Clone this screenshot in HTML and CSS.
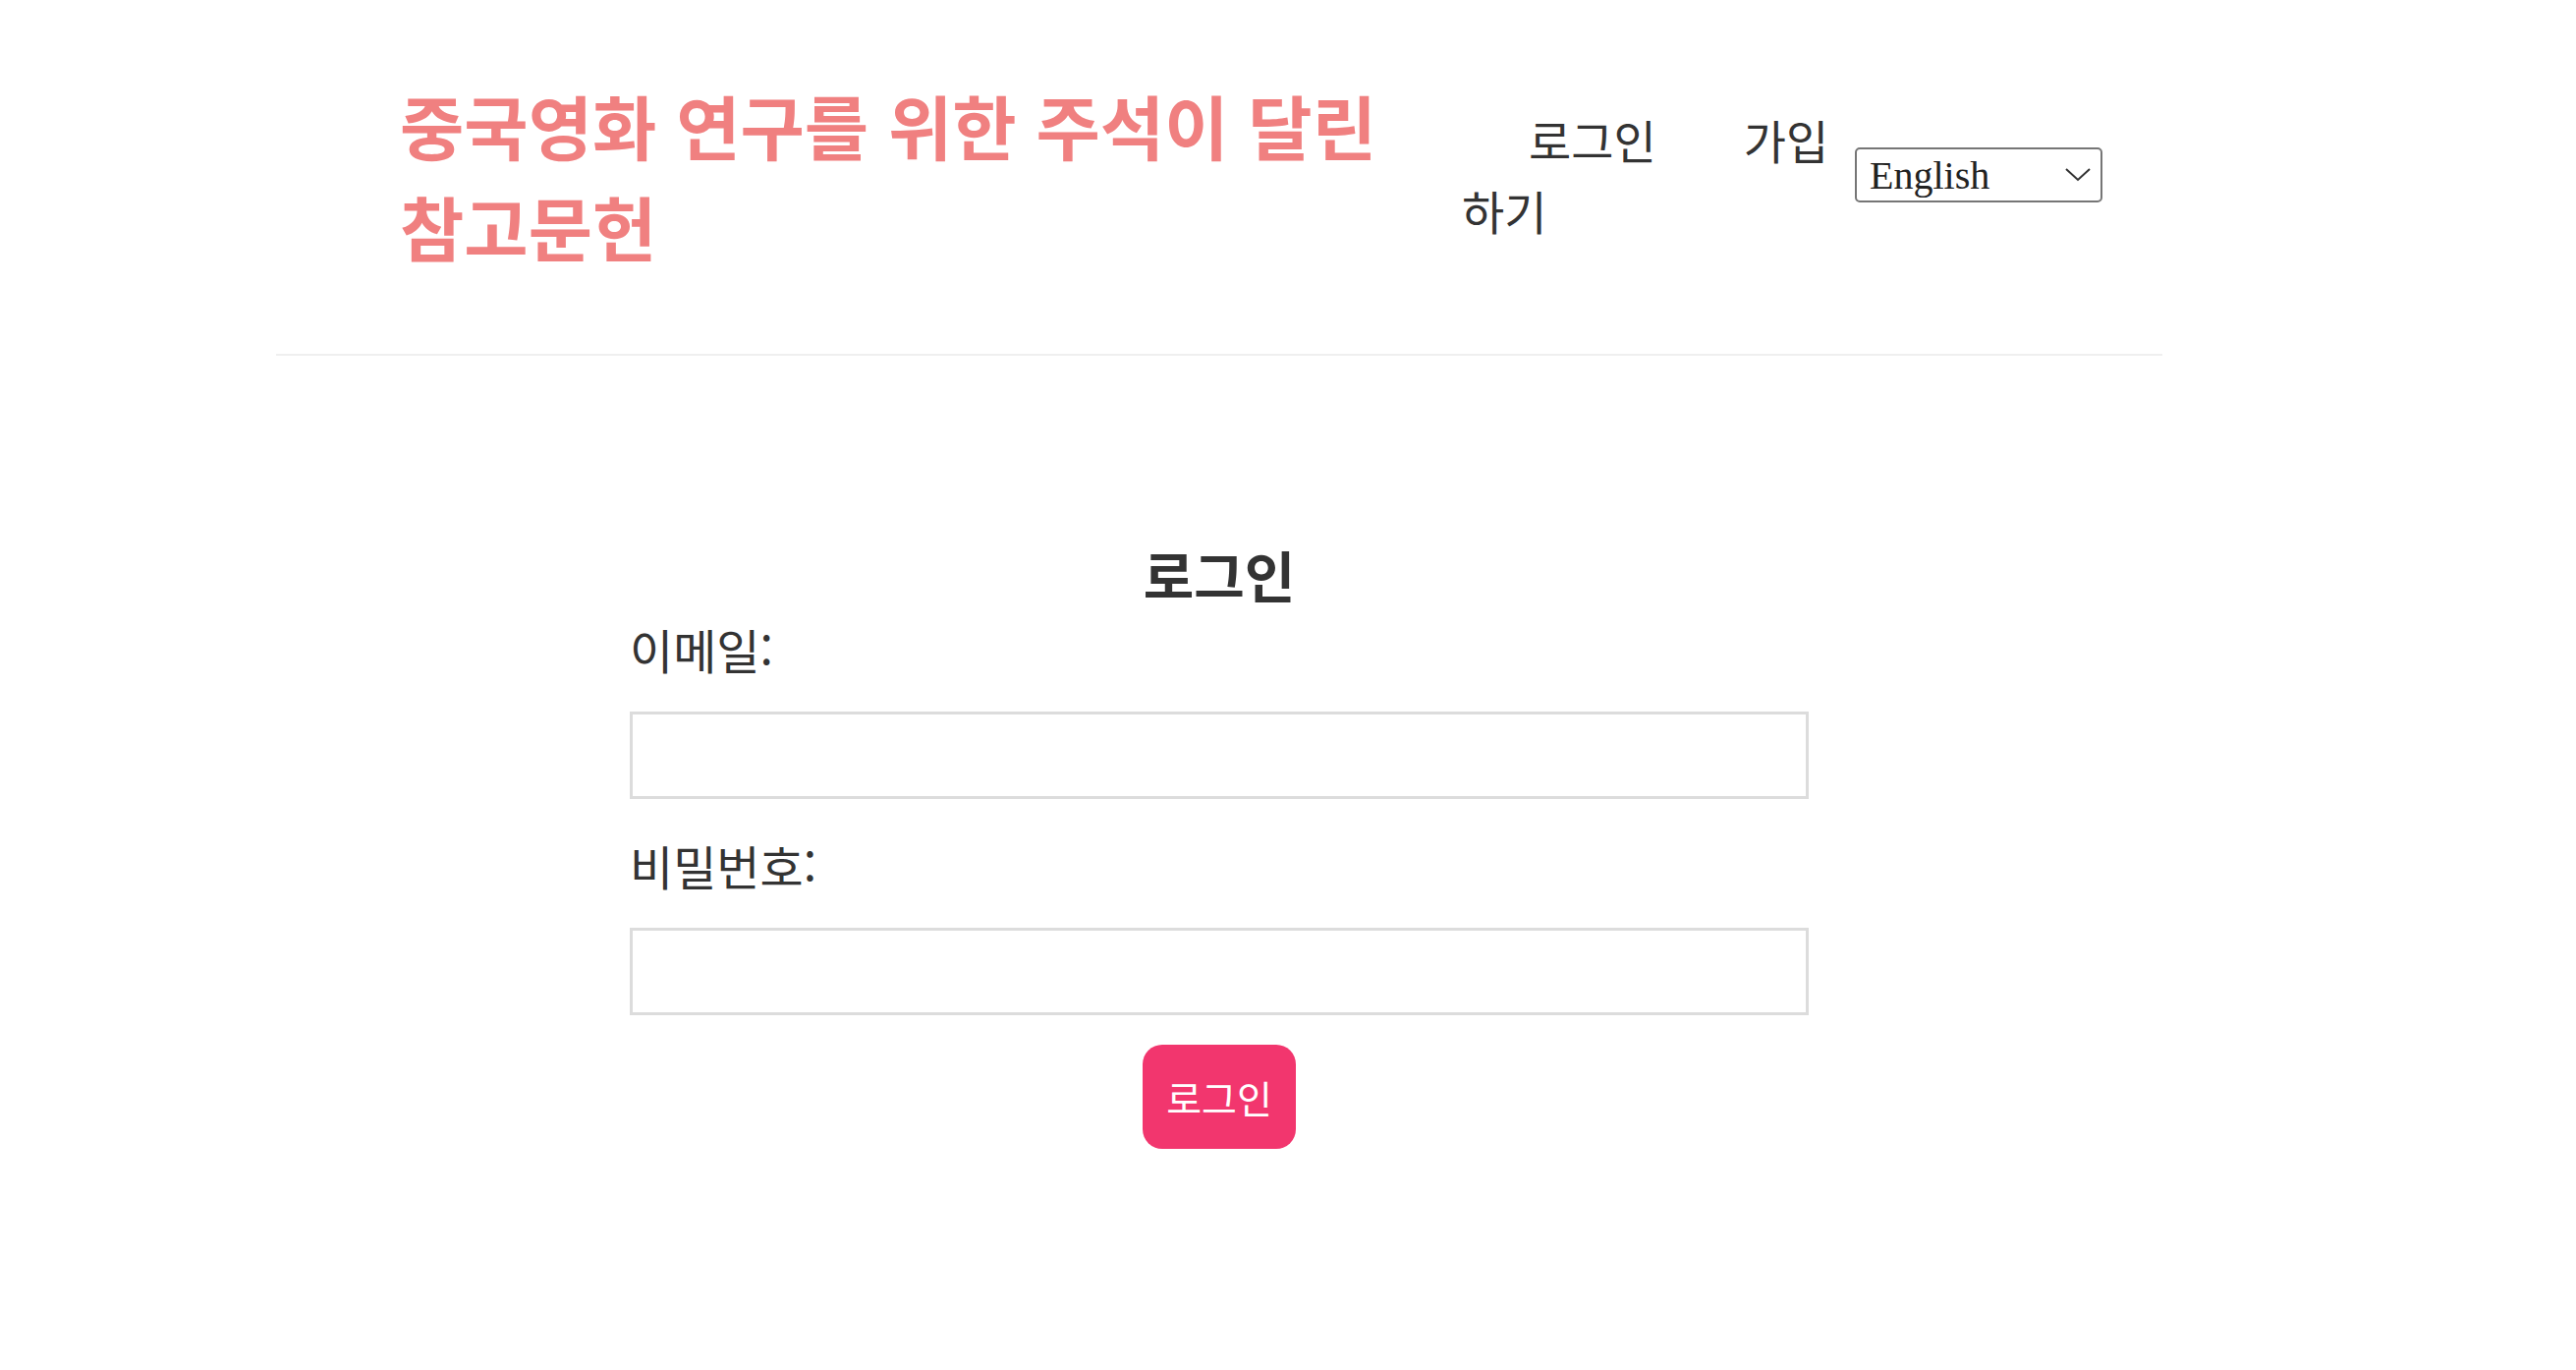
FILE: index.html
```
<!DOCTYPE html>
<html lang="ko">
<head>
    <meta charset="UTF-8">
    <meta name="viewport" content="width=device-width, initial-scale=1.0">
    <title>로그인</title>
    <link rel="stylesheet" href="styles.css">
</head>
<body>
    <div class="container">
        <header class="site-header">
            <h1 class="site-title">중국영화 연구를 위한 주석이 달린 참고문헌</h1>
            <nav class="site-nav"><a href="#" class="nav-link">로그인</a><a href="#" class="nav-link">가입하기</a></nav>
            <div class="lang-select">
                <select id="language">
                    <option value="en">English</option>
                    <option value="ko">한국어</option>
                    <option value="zh">中文</option>
                </select>
                <svg class="lang-arrow" width="26" height="14" viewBox="0 0 26 14">
                    <path d="M1 1 L13 12 L25 1" fill="none" stroke="#333" stroke-width="2"/>
                </svg>
            </div>
        </header>

        <main class="main">
            <form class="login-form">
                <h2>로그인</h2>
                <div class="field">
                    <label for="email">이메일:</label>
                    <input type="email" id="email">
                </div>
                <div class="field">
                    <label for="password">비밀번호:</label>
                    <input type="password" id="password">
                </div>
                <button type="submit" class="login-button">로그인</button>
            </form>
        </main>
    </div>
</body>
</html>
```

FILE: styles.css
```
/* Login page */
body {
    font-family: "Noto Sans CJK KR", "Noto Sans", sans-serif;
    margin: 0;
    padding: 0;
    color: #333;
    background-color: #fff;
}

.container {
    width: 1920px;
    margin-left: 281px;
}

.site-header {
    display: flex;
    align-items: center;
    padding: 75px 61px 79px 126px;
    border-bottom: 2px solid #efefef;
}

.site-title {
    flex: 1;
    margin: 0 24px 0 0;
    font-size: 71px;
    line-height: 103px;
    font-weight: bold;
    color: #f08080;
}

.site-nav {
    width: 400px;
    font-size: 47px;
    line-height: 72px;
}

.nav-link {
    color: #333;
    text-decoration: none;
    margin-left: 68px;
    margin-right: 21px;
}

.lang-select {
    position: relative;
}

.lang-select select {
    appearance: none;
    -webkit-appearance: none;
    width: 252px;
    height: 56px;
    padding: 0 0 0 13px;
    font-family: "Liberation Serif", serif;
    font-size: 40px;
    color: #222;
    background-color: #fff;
    border: 2px solid #767676;
    border-radius: 5px;
    outline: none;
    display: block;
}

.lang-arrow {
    position: absolute;
    right: 12px;
    top: 21px;
    pointer-events: none;
}

.main {
    padding-top: 185px;
}

.login-form {
    width: 1200px;
    margin: 0 auto;
}

.login-form h2 {
    margin: 0 0 7px 0;
    font-size: 56px;
    line-height: 74px;
    font-weight: bold;
    text-align: center;
    color: #333;
}

.field + .field {
    margin-top: 35px;
}

.field label {
    display: block;
    font-size: 48px;
    line-height: 64px;
    margin-bottom: 32px;
}

.field input {
    display: block;
    width: 100%;
    height: 89px;
    box-sizing: border-box;
    border: 3px solid #dcdcdc;
    font-size: 36px;
    padding: 0 16px;
    outline: none;
}

.login-button {
    display: block;
    margin: 30px auto 0 auto;
    height: 106px;
    padding: 0 24px;
    font-family: "Noto Sans CJK KR", sans-serif;
    font-size: 39px;
    color: #fff;
    background-color: #f2366e;
    border: none;
    border-radius: 20px;
    cursor: pointer;
}
```
